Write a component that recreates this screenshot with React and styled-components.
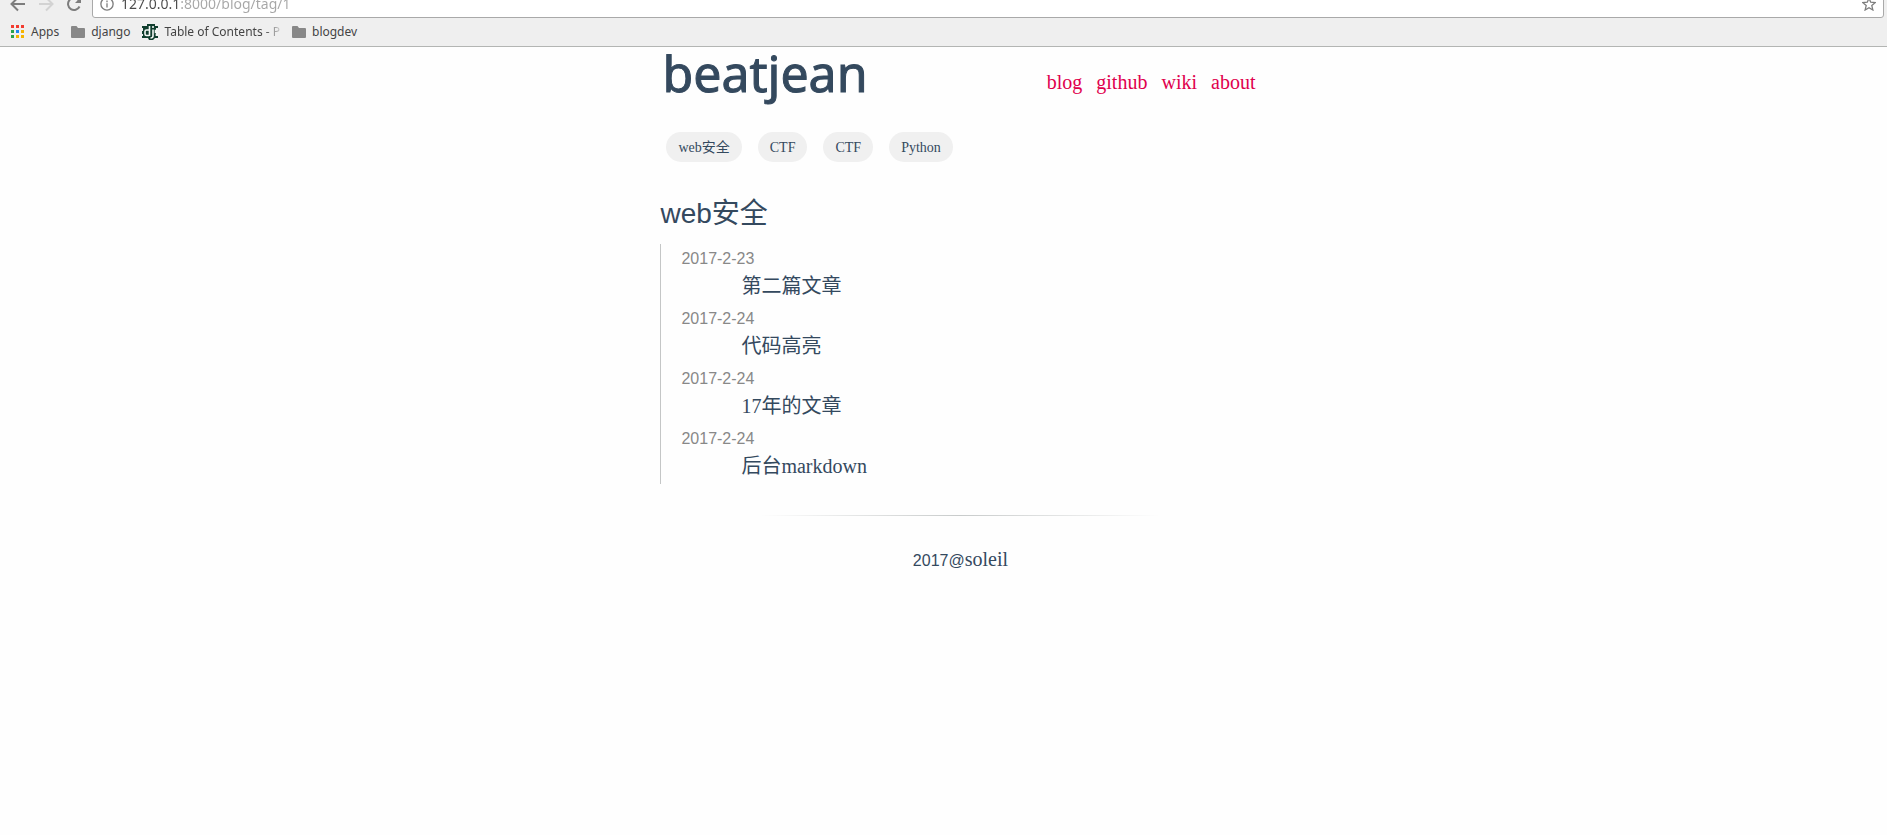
import React from "react";
import styled, { createGlobalStyle } from "styled-components";

const serif = `"Liberation Serif", "Noto Sans CJK SC", serif`;
const sans = `"Liberation Sans", "Noto Sans CJK SC", sans-serif`;
const ui = `"Noto Sans", sans-serif`;
const ink = "#34495e";

const GlobalStyle = createGlobalStyle`
  *, *::before, *::after { box-sizing: border-box; }
  body { margin: 0; background: #fefefe; color: ${ink}; font-family: ${serif}; }
`;

const Chrome = styled.header`
  background: #efefef;
  border-bottom: 1px solid #b3b5b3;
  font-family: ${ui};
`;

const Toolbar = styled.div`
  display: flex;
  align-items: flex-end;
  height: 18px;
  padding: 0 3px 0 4px;
  overflow: hidden;
`;

const ToolButton = styled.button`
  flex: none;
  display: flex;
  align-items: center;
  justify-content: center;
  width: 28px;
  height: 28px;
  padding: 0;
  border: 0;
  background: none;
  color: ${(p) => (p.disabled ? "#d3d3d3" : "#7d7d7d")};
`;

const AddressBar = styled.label`
  flex: 1;
  display: flex;
  align-items: center;
  gap: 7px;
  height: 28px;
  margin-left: 4px;
  padding: 0 7px;
  border: 1px solid #a9a9a9;
  border-radius: 3px;
  background: #fff;
  color: #7d7d7d;
`;

const AddressInput = styled.input`
  flex: 1;
  min-width: 0;
  padding: 0;
  border: 0;
  outline: 0;
  font: 14px/20px ${ui};
  color: transparent;
  background: linear-gradient(90deg, #4a4a4a 59px, #a6a6a6 59px);
  background-clip: text;
`;

const Bookmarks = styled.nav`
  display: flex;
  align-items: center;
  gap: 12px;
  height: 28px;
  padding: 0 11px;
`;

const Bookmark = styled.a`
  display: flex;
  align-items: center;
  gap: 6px;
  color: #444;
  font-size: 12px;
  line-height: 16px;
  white-space: nowrap;
  text-decoration: none;
`;

const BookmarkLabel = styled.span`
  ${(p) => p.$fade && "mask-image: linear-gradient(90deg, #000 100px, transparent 120px);"}
`;

const Page = styled.div`
  width: 600px;
  max-width: 65%;
  margin-left: 35%;
`;

const Masthead = styled.header`
  display: flex;
  justify-content: space-between;
  align-items: flex-end;
  padding: 0 5px 8px 2px;
`;

const SiteTitle = styled.a`
  color: ${ink};
  font: 400 50px/52px "Comic Sans MS", "Noto Sans", sans-serif;
  -webkit-text-stroke: 1px ${ink};
  text-decoration: none;
`;

const SiteNav = styled.nav`
  display: flex;
  gap: 14px;
`;

const NavLink = styled.a`
  color: #e0004d;
  font-size: 20px;
  line-height: 34px;
  text-decoration: none;
`;

const Tags = styled.nav`
  display: flex;
  gap: 16px;
  padding: 25px 6px 0;
`;

const Tag = styled.a`
  height: 30px;
  padding: 0 12px;
  border-radius: 15px;
  background: #f0f0f0;
  color: ${ink};
  font-size: 14px;
  line-height: 32px;
  text-decoration: none;
`;

const Heading = styled.h1`
  margin: 32px 0 10px;
  font: 400 28px/40px ${sans};
`;

const Timeline = styled.dl`
  margin: 0;
  padding-left: 20px;
  border-left: 1px solid #c4c6c6;
`;

const PostDate = styled.dt`
  padding-top: 4px;
  color: #888;
  font: 16px/22px ${sans};
`;

const PostTitle = styled.dd`
  margin: 0 0 0 60px;
  height: 34px;
  font-size: 20px;
  line-height: 32px;
`;

const PostLink = styled.a`
  color: ${ink};
  text-decoration: none;
`;

const Divider = styled.hr`
  height: 1px;
  margin: 31px 100px 30px;
  border: 0;
  background: linear-gradient(90deg, transparent, #c8cbcb, transparent);
`;

const Footer = styled.footer`
  text-align: center;
  font: 16px/26px ${sans};
`;

const Author = styled.a`
  color: ${ink};
  font-family: ${serif};
  font-size: 20px;
  text-decoration: none;
`;

const Stroke = ({ size = 16, width = 2, children }) => (
  <svg width={size} height={size} viewBox="0 0 16 16" fill="none" stroke="currentColor" strokeWidth={width} aria-hidden="true">
    {children}
  </svg>
);

const AppsIcon = () => {
  const colors = ["#f33c30", "#f33c30", "#f33c30", "#2ba24c", "#1e88f0", "#f5b400", "#2ba24c", "#f5b400", "#f5b400"];
  return (
    <svg width="14" height="14" aria-hidden="true">
      {colors.map((c, i) => (
        <rect key={i} x={(i % 3) * 5} y={Math.floor(i / 3) * 5} width="3" height="3" fill={c} />
      ))}
    </svg>
  );
};

const FolderIcon = () => (
  <svg width="14" height="12" viewBox="0 0 14 12" fill="#888" aria-hidden="true">
    <path d="M1 0h4.500l1.500 2h6q1 0 1 1v8q0 1-1 1H1q-1 0-1-1V1q0-1 1-1z" />
  </svg>
);

const DjangoIcon = () => (
  <svg width="16" height="16" viewBox="0 0 16 16" aria-hidden="true">
    <path d="M5 0h8v2h3v2h-2v8h2v2h-3l-2 2H7l-1-2H0v-2h1v-2H0V7h1V4H0V2h5z" fill="#103e2e" />
    <path
      d="M7.500 2v10M7 6H4.500Q3 6 3 7.500v2.500Q3 11.500 4.500 11.500H7M11 5.500v6.500q0 2-2.500 2M11 2v2M15.500 6.500h-2v2h2V11h-2"
      fill="none" stroke="#f4f8f5" strokeWidth="1.600" />
  </svg>
);

const bookmarks = [
  { label: "Apps", icon: <AppsIcon /> },
  { label: "django", icon: <FolderIcon /> },
  { label: "Table of Contents - P", icon: <DjangoIcon />, fade: true },
  { label: "blogdev", icon: <FolderIcon /> },
];

const posts = [
  ["2017-2-23", "第二篇文章"],
  ["2017-2-24", "代码高亮"],
  ["2017-2-24", "17年的文章"],
  ["2017-2-24", "后台markdown"],
];

export default function App() {
  return (
    <>
      <GlobalStyle />
      <Chrome>
        <Toolbar>
          <ToolButton aria-label="Back">
            <Stroke><path d="M15 8H2M8 1.500L1.500 8 8 14.500" /></Stroke>
          </ToolButton>
          <ToolButton aria-label="Forward" disabled>
            <Stroke><path d="M1 8h13M8 1.500L14.500 8 8 14.500" /></Stroke>
          </ToolButton>
          <ToolButton aria-label="Reload">
            <Stroke>
              <path d="M13.500 10.500A6 6 0 1 1 12.500 4" />
              <path d="M15 1v6H9z" fill="currentColor" stroke="none" />
            </Stroke>
          </ToolButton>
          <AddressBar>
            <Stroke size={14} width={1.5}>
              <circle cx="8" cy="8" r="7" />
              <path d="M8 7v5M8 4v2" />
            </Stroke>
            <AddressInput aria-label="Address" defaultValue="127.0.0.1:8000/blog/tag/1" />
            <Stroke size={14} width={1.5}>
              <path d="M8 1.500l2 4.500 5 .500-3.800 3.300 1.200 5L8 12.200l-4.400 2.600 1.200-5L1 6.500 6 6z" />
            </Stroke>
          </AddressBar>
        </Toolbar>
        <Bookmarks aria-label="Bookmarks">
          {bookmarks.map((b) => (
            <Bookmark key={b.label} href="#">
              {b.icon}
              <BookmarkLabel $fade={b.fade}>{b.label}</BookmarkLabel>
            </Bookmark>
          ))}
        </Bookmarks>
      </Chrome>
      <Page>
        <Masthead>
          <SiteTitle href="#">beatjean</SiteTitle>
          <SiteNav>
            {["blog", "github", "wiki", "about"].map((name) => (
              <NavLink key={name} href="#">{name}</NavLink>
            ))}
          </SiteNav>
        </Masthead>
        <Tags aria-label="Tags">
          {["web安全", "CTF", "CTF", "Python"].map((name, i) => (
            <Tag key={i} href="#">{name}</Tag>
          ))}
        </Tags>
        <main>
          <Heading>web安全</Heading>
          <Timeline>
            {posts.map(([date, title]) => (
              <React.Fragment key={title}>
                <PostDate>{date}</PostDate>
                <PostTitle><PostLink href="#">{title}</PostLink></PostTitle>
              </React.Fragment>
            ))}
          </Timeline>
        </main>
        <Divider />
        <Footer>2017@<Author href="#">soleil</Author></Footer>
      </Page>
    </>
  );
}
